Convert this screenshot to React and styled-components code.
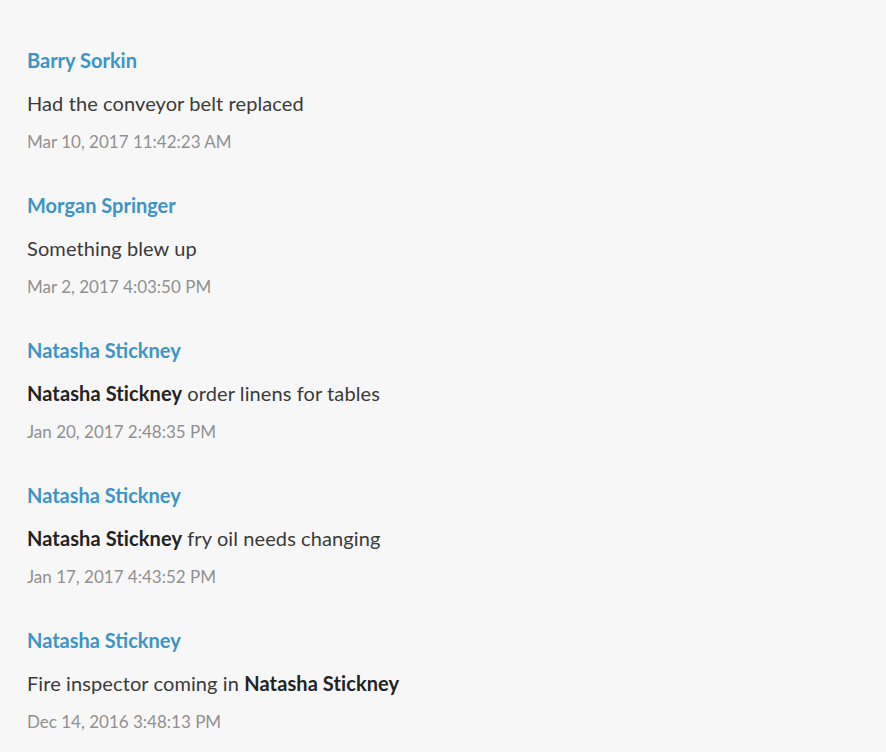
import React from 'react';
import styled, { createGlobalStyle } from 'styled-components';

const notes = [
  { author: 'Barry Sorkin', parts: [{ t: 'Had the conveyor belt replaced' }], date: 'Mar 10, 2017 11:42:23 AM' },
  { author: 'Morgan Springer', parts: [{ t: 'Something blew up' }], date: 'Mar 2, 2017 4:03:50 PM' },
  {
    author: 'Natasha Stickney',
    parts: [{ t: 'Natasha Stickney', b: true }, { t: ' order linens for tables' }],
    date: 'Jan 20, 2017 2:48:35 PM'
  },
  {
    author: 'Natasha Stickney',
    parts: [{ t: 'Natasha Stickney', b: true }, { t: ' fry oil needs changing' }],
    date: 'Jan 17, 2017 4:43:52 PM'
  },
  {
    author: 'Natasha Stickney',
    parts: [{ t: 'Fire inspector coming in ' }, { t: 'Natasha Stickney', b: true }],
    date: 'Dec 14, 2016 3:48:13 PM'
  }
];

const GlobalStyle = createGlobalStyle`
  html, body {
    margin: 0;
    background: #f7f7f7;
  }
  body {
    font-family: Lato, "Open Sans", sans-serif;
  }
`;

const Feed = styled.div`
  display: flex;
  flex-direction: column;
  gap: 41px;
  padding: 48px 27px;
`;

const Note = styled.div`
  display: flex;
  flex-direction: column;
`;

const Author = styled.a`
  font-size: 20px;
  line-height: 24px;
  font-weight: 700;
  color: #3d94c8;
  text-decoration: none;
`;

const Body = styled.p`
  margin: 19px 0 0;
  font-size: 20px;
  line-height: 24px;
  color: #3a3a3a;
  letter-spacing: 0.1px;
`;

const Mention = styled.strong`
  font-weight: 700;
  color: #222;
`;

const Stamp = styled.span`
  margin-top: 17px;
  font-size: 17px;
  line-height: 20px;
  color: #909090;
`;

export default function App() {
  return (
    <>
      <GlobalStyle />
      <Feed>
        {notes.map((n, i) => (
          <Note key={i}>
            <Author>{n.author}</Author>
            <Body>
              {n.parts.map((p, j) => (p.b ? <Mention key={j}>{p.t}</Mention> : <span key={j}>{p.t}</span>))}
            </Body>
            <Stamp>{n.date}</Stamp>
          </Note>
        ))}
      </Feed>
    </>
  );
}
